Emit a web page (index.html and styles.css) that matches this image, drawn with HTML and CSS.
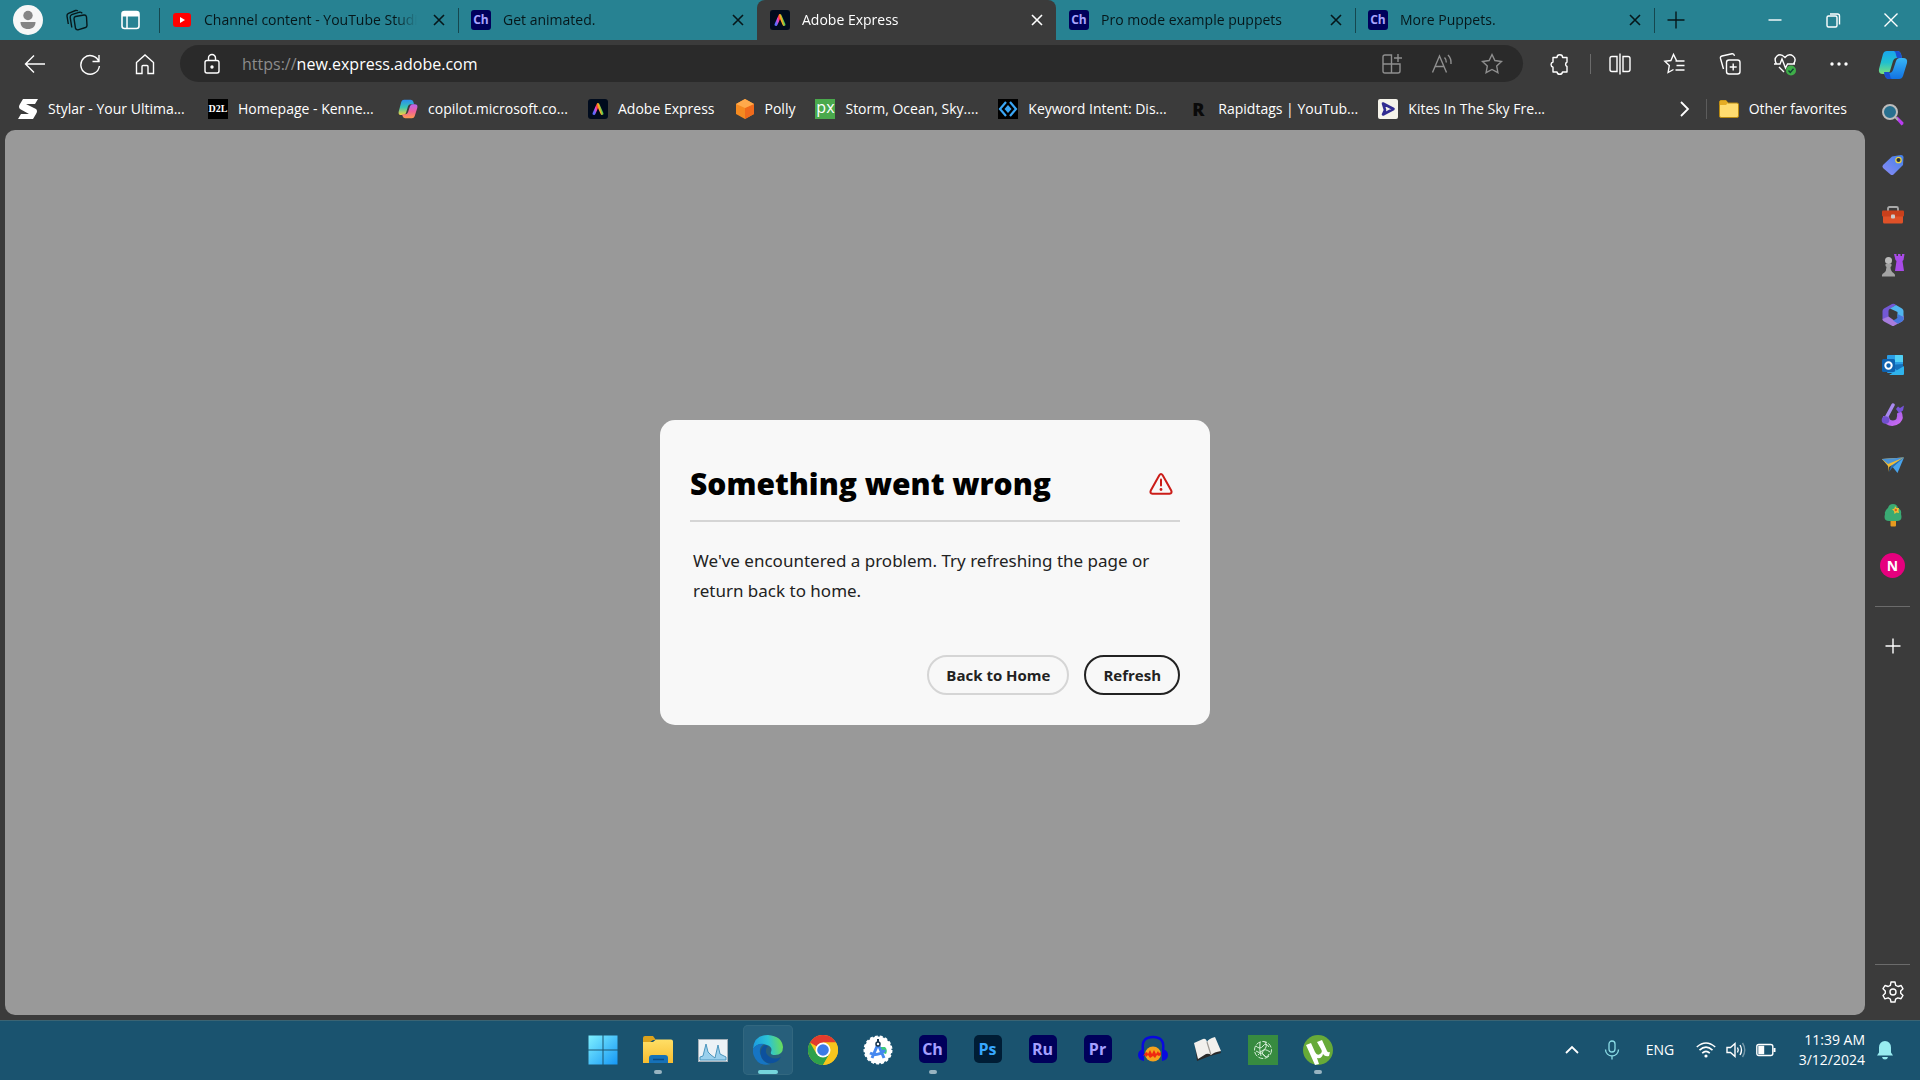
FILE: index.html
```html
<!DOCTYPE html>
<html lang="en">
<head>
  <meta charset="UTF-8" />
  <meta name="viewport" content="width=device-width, initial-scale=1.0"/>
  <title>Adobe Express</title>
  <link rel="stylesheet" href="styles.css">
</head>
<body>
  <!-- shared gradients and icons -->
  <svg class="defs" aria-hidden="true">
    <defs>
      <linearGradient id="gBlueGreen" x1="0" y1="0" x2="0" y2="1"><stop offset="0" stop-color="#19a5ee"/><stop offset="0.5" stop-color="#21c0cf"/><stop offset="1" stop-color="#7be07a"/></linearGradient>
      <linearGradient id="gBlue" x1="0" y1="0" x2="0" y2="1"><stop offset="0" stop-color="#38b6f5"/><stop offset="1" stop-color="#1272e2"/></linearGradient>
      <linearGradient id="gWarm" x1="0" y1="0" x2="0" y2="1"><stop offset="0" stop-color="#b765f0"/><stop offset="0.5" stop-color="#f0609a"/><stop offset="1" stop-color="#ff9a4c"/></linearGradient>
      <linearGradient id="gCool" x1="0" y1="0" x2="0" y2="1"><stop offset="0" stop-color="#2a8cf0"/><stop offset="0.5" stop-color="#38c6b4"/><stop offset="1" stop-color="#f5d13a"/></linearGradient>
      <linearGradient id="gRainbow" x1="0" y1="0.8" x2="1" y2="0.5"><stop offset="0" stop-color="#5a6bff"/><stop offset="0.3" stop-color="#e846d0"/><stop offset="0.5" stop-color="#ff3b30"/><stop offset="0.7" stop-color="#ffb020"/><stop offset="1" stop-color="#35c95a"/></linearGradient>
      <linearGradient id="gPurple" x1="0" y1="0" x2="1" y2="1"><stop offset="0" stop-color="#8b5ae8"/><stop offset="1" stop-color="#d56cf2"/></linearGradient>
      <linearGradient id="gWin" x1="0" y1="0" x2="1" y2="1"><stop offset="0" stop-color="#7ff0ff"/><stop offset="1" stop-color="#1597f5"/></linearGradient>
      <linearGradient id="gFolder" x1="0" y1="0" x2="0" y2="1"><stop offset="0" stop-color="#ffdf66"/><stop offset="1" stop-color="#f8bd30"/></linearGradient>
      <linearGradient id="gEdge" x1="0" y1="0.3" x2="1" y2="0.2"><stop offset="0" stop-color="#1b9de2"/><stop offset="0.5" stop-color="#2cc3d5"/><stop offset="1" stop-color="#6fe04e"/></linearGradient>
      <linearGradient id="gTag" x1="0" y1="1" x2="1" y2="0"><stop offset="0" stop-color="#8d8cf5"/><stop offset="1" stop-color="#3f80ea"/></linearGradient>
    </defs>
    <symbol id="close" viewBox="0 0 20 20"><path d="M5 5l10 10M15 5L5 15" fill="none" stroke="currentColor" stroke-width="1.6"/></symbol>
    <symbol id="express" viewBox="0 0 20 20"><rect width="20" height="20" rx="3" fill="#000b1d"/><path d="M6 14.500L10 5.500l4 9" fill="none" stroke="url(#gRainbow)" stroke-width="3" stroke-linejoin="round" stroke-linecap="round"/></symbol>
  </svg>

  <header class="titlebar">
    <div class="titlebar-left">
      <button class="profile" aria-label="Profile"><svg viewBox="0 0 30 30"><circle cx="15" cy="15" r="15" fill="#f7f7f7"/><circle cx="15" cy="10.500" r="4.700" fill="#858585"/><path d="M7.500 17h15c0 4.500-3 7-7.500 7s-7.500-2.500-7.500-7z" fill="#858585"/></svg></button>
      <button class="title-btn" aria-label="Workspaces"><svg class="line" viewBox="0 0 24 24"><path d="M10.500 8.500l8.500-1.500q2-.2 2.500 1.800l.5 8.700q0 1.500-1.500 2l-7.500 2.300q-2 .3-2.500-1.500L9 10.800q0-1.800 1.500-2.300z"/><path d="M6.800 19.500L5.200 9.500q-.2-2 1.500-2.800l8-2.500q1.800-.3 2.500 1.200"/><path d="M3.300 16L2 8q-.2-1.800 1.500-2.600l7-2.900q1.500-.4 2.300.5"/></svg></button>
      <button class="title-btn" aria-label="Tab actions"><svg viewBox="0 0 24 24"><rect x="4" y="3.500" width="17" height="17" rx="2.500" fill="none" stroke="#fff" stroke-width="1.600"/><path d="M4 4h17v4.500H4z" fill="#fff"/><path d="M9 8v12" stroke="#fff" stroke-width="1.500"/></svg></button>
    </div>
    <nav class="tabs">
      <div class="tab">
        <svg class="favicon" viewBox="0 0 20 20"><rect x="1" y="3" width="18" height="14" rx="3" fill="#f00"/><path d="M8 7l5 3-5 3z" fill="#fff"/></svg>
        <a class="tab-title" href="#">Channel content - YouTube Studio</a>
        <button class="tab-close" aria-label="Close tab"><svg><use href="#close"/></svg></button>
      </div>
      <div class="tab">
        <span class="favicon ch">Ch</span>
        <a class="tab-title" href="#">Get animated.</a>
        <button class="tab-close" aria-label="Close tab"><svg><use href="#close"/></svg></button>
      </div>
      <div class="tab active">
        <svg class="favicon"><use href="#express"/></svg>
        <a class="tab-title" href="#">Adobe Express</a>
        <button class="tab-close" aria-label="Close tab"><svg><use href="#close"/></svg></button>
      </div>
      <div class="tab">
        <span class="favicon ch">Ch</span>
        <a class="tab-title" href="#">Pro mode example puppets</a>
        <button class="tab-close" aria-label="Close tab"><svg><use href="#close"/></svg></button>
      </div>
      <div class="tab">
        <span class="favicon ch">Ch</span>
        <a class="tab-title" href="#">More Puppets.</a>
        <button class="tab-close" aria-label="Close tab"><svg><use href="#close"/></svg></button>
      </div>
      <button class="new-tab" aria-label="New tab"><svg class="line" viewBox="0 0 20 20"><path d="M10 1.500v17M1.500 10h17"/></svg></button>
    </nav>
    <div class="window-controls">
      <button aria-label="Minimize"><svg class="line" viewBox="0 0 16 16"><path d="M1.500 8h13"/></svg></button>
      <button aria-label="Restore"><svg class="line" viewBox="0 0 16 16"><rect x="2" y="4" width="10" height="11" rx="1.500"/><path d="M5 2h7.500q2 0 2 2v8.500"/></svg></button>
      <button aria-label="Close"><svg class="line" viewBox="0 0 16 16"><path d="M1.500 1.500l13 13M14.500 1.500l-13 13"/></svg></button>
    </div>
  </header>

  <div class="browser">
    <div class="browser-main">
      <div class="toolbar">
        <button class="tool" aria-label="Back"><svg class="line" viewBox="0 0 24 24"><path d="M22 12H2.500M11 3.500L2.500 12l8.500 8.500"/></svg></button>
        <button class="tool" aria-label="Refresh page"><svg class="line" viewBox="0 0 24 24"><path d="M21 10a9.300 9.300 0 1 0 .4 4M21 3v6.500h-6.500"/></svg></button>
        <button class="tool" aria-label="Home"><svg class="line" viewBox="0 0 24 24"><path d="M3.500 10.500L12 3l8.500 7.500V21.500H15v-7q0-1-1-1h-4q-1 0-1 1v7H3.500z"/></svg></button>
        <div class="address">
          <svg class="line lock" viewBox="0 0 24 24"><rect x="5" y="8.500" width="14" height="12.500" rx="2"/><path d="M8.500 8.500V6a3.500 3.500 0 0 1 7 0v2.500"/><circle cx="12" cy="15" r="1" fill="#fff"/></svg>
          <label for="url">https://</label>
          <input id="url" type="text" value="new.express.adobe.com">
          <button aria-label="App available"><svg class="line" viewBox="0 0 24 24"><path d="M3 12h17v7q0 2-2 2H5q-2 0-2-2V5q0-2 2-2h6.500v18M18 2v8M14 6h8"/></svg></button>
          <button aria-label="Read aloud"><svg class="line" viewBox="0 0 24 24"><path d="M2.500 20.500L9.500 4l7 16.500M5 14.500h9M14.500 5.500q2 2 1.800 5M18 3q3.500 3.500 3 9"/></svg></button>
          <button aria-label="Add to favorites"><svg class="line" viewBox="0 0 24 24"><path d="M12 2.500l2.900 6 6.600 1-4.800 4.600 1.200 6.600L12 17.500l-5.900 3.200 1.200-6.600L2.500 9.500l6.600-1z"/></svg></button>
        </div>
        <button class="tool" aria-label="Extensions"><svg class="line" viewBox="0 0 24 24"><path d="M9 5.500a2.800 2.800 0 0 1 5.600 0H19v4.500a2.500 2.500 0 0 0 0 4.500V20h-4.500a2.800 2.800 0 0 1-5.500 0H5v-4.800a2.700 2.700 0 0 1 0-5.200V5.500z" stroke-linejoin="round"/></svg></button>
        <span class="tool-sep"></span>
        <button class="tool" aria-label="Split screen"><svg class="line" viewBox="0 0 24 24"><path d="M9 4.500H4q-2 0-2 2v11q0 2 2 2h5zM15 4.500h5q2 0 2 2v11q0 2-2 2h-5zM12 1.500v21"/></svg></button>
        <button class="tool" aria-label="Favorites"><svg class="line" viewBox="0 0 24 24"><path d="M13.500 8.500L10.500 2.500l-2.600 6-6 .8 4.400 4.200-1.200 7 5.400-3M12.500 9h9M13.500 13.500h8M12.500 18h9"/></svg></button>
        <button class="tool" aria-label="Collections"><svg class="line" viewBox="0 0 24 24"><rect x="8.500" y="8" width="13.500" height="14" rx="2.500"/><path d="M15.200 11.500v7M11.700 15h7M5.500 17L2.500 6.500q-.5-2 1.500-2.500L14 1.800q2-.3 2.500 2"/></svg></button>
        <button class="tool" aria-label="Browser essentials"><svg class="line" viewBox="0 0 24 24"><path d="M3.500 12Q.5 7 4 4t8 1.500Q16 1 20 4t.5 8M1 12h6l2-5 3.500 9 2-4H22M6 15l5 5"/><circle cx="18" cy="18.500" r="5" fill="#3fae49" stroke="none"/><path d="M15.500 18.500l1.800 2 3.200-3.700" stroke="#143"/></svg></button>
        <button class="tool more" aria-label="Settings and more"><svg viewBox="0 0 24 24"><circle cx="5" cy="12" r="1.700" fill="#fff"/><circle cx="12" cy="12" r="1.700" fill="#fff"/><circle cx="19" cy="12" r="1.700" fill="#fff"/></svg></button>
      </div>

      <nav class="bookmarks">
        <a class="bookmark cut" href="#"><svg class="favicon" viewBox="0 0 20 20"><path d="M5 0h15l-3 5H8l10 5q2 2 0 5l-3 5H0l3-5h8L2 10Q0 8 2 5z" fill="#fff"/></svg>Stylar - Your Ultima...</a>
        <a class="bookmark cut" href="#"><span class="favicon d2l">D2L</span>Homepage - Kenne...</a>
        <a class="bookmark cut" href="#"><svg class="favicon" viewBox="0 0 30 30"><path d="M9 1h10q3 0 4 3l1 4h-5q-3 0-4 3l-3 10q-1 3-4 3H5q-5 0-4-5L5 4q1-3 4-3z" fill="url(#gCool)"/><path d="M21 29H11q-3 0-4-3l-1-3h5q3 0 4-3l3-9q1-3 4-3h3q5 0 4 5l-4 13q-1 3-4 3z" fill="url(#gWarm)"/></svg>copilot.microsoft.co...</a>
        <a class="bookmark" href="#"><svg class="favicon"><use href="#express"/></svg>Adobe Express</a>
        <a class="bookmark" href="#"><svg class="favicon" viewBox="0 0 20 20"><path d="M10 0l9 5v10l-9 5-9-5V5z" fill="#f58a20"/><path d="M10 9l9-4v10l-9 5z" fill="#f06a1c"/><path d="M10 0l9 5-9 4-9-4z" fill="#ffa94b"/></svg>Polly</a>
        <a class="bookmark" href="#"><span class="favicon px">px</span>Storm, Ocean, Sky....</a>
        <a class="bookmark cut" href="#"><svg class="favicon" viewBox="0 0 20 20"><rect width="20" height="20"/><path d="M8 3l-6 7 6 7M12 3l6 7-6 7" fill="none" stroke="#3aa6f5" stroke-width="2.200"/><path d="M10 6l3.500 4-3.500 4-3.500-4z" fill="#3aa6f5"/></svg>Keyword Intent: Dis...</a>
        <a class="bookmark cut" href="#"><span class="favicon rapid">R</span>Rapidtags | YouTub...</a>
        <a class="bookmark cut" href="#"><svg class="favicon" viewBox="0 0 20 20"><rect width="20" height="20" rx="2" fill="#f5f3ea"/><path d="M5 4.500l10.500 5.500L5 15.500l2-4.500z" fill="none" stroke="#312c91" stroke-width="2.600" stroke-linejoin="round"/></svg>Kites In The Sky Fre...</a>
        <button class="overflow" aria-label="More favorites"><svg class="line" viewBox="0 0 20 20"><path d="M7 3l7 7-7 7" stroke-width="1.800"/></svg></button>
        <a class="bookmark other" href="#"><svg class="favicon" viewBox="0 0 20 20"><path d="M.5 3q0-1.500 1.500-1.500h5L9 4h9q1.500 0 1.500 1.500V17q0 1.500-1.500 1.500H2Q.5 18.500.5 17z" fill="#ffdc70" stroke="#b98a10"/><path d="M.8 6H7l2-2-2-2.500H2Q.8 1.500.8 3z" fill="#e5ac24"/></svg>Other favorites</a>
      </nav>

      <main class="page">
        <section class="dialog" role="alertdialog" aria-labelledby="dialog-title">
          <div class="dialog-head">
            <h1 id="dialog-title">Something went wrong</h1>
            <svg viewBox="0 0 24 24"><path d="M10.300 3.300q1.700-2.600 3.400 0l8.500 15.200q1.300 3-1.700 3.300h-17q-3-.3-1.700-3.300z" fill="none" stroke="#cb1d18" stroke-width="2"/><path d="M12 7.500v6" stroke="#cb1d18" stroke-width="2" stroke-linecap="round"/><circle cx="12" cy="17.500" r="1.400" fill="#cb1d18"/></svg>
          </div>
          <p>We've encountered a problem. Try refreshing the page or return back to home.</p>
          <div class="dialog-actions">
            <button>Back to Home</button>
            <button class="primary">Refresh</button>
          </div>
        </section>
      </main>
    </div>

    <aside class="sidebar">
      <button class="copilot" aria-label="Copilot"><svg viewBox="0 0 30 30"><path d="M9 1h10q3 0 4 3l1 4h-5q-3 0-4 3l-3 10q-1 3-4 3H5q-5 0-4-5L5 4q1-3 4-3z" fill="url(#gBlueGreen)"/><path d="M21 29H11q-3 0-4-3l-1-3h5q3 0 4-3l3-9q1-3 4-3h3q5 0 4 5l-4 13q-1 3-4 3z" fill="url(#gBlue)"/><path d="M19 8h5l-1-4q-1-3-4-3h-3q2 1 2 4zM11 22H6l1 4q1 3 4 3h3q-2-1-2-4z" fill="#1b4fd0"/></svg></button>
      <button aria-label="Search"><svg viewBox="0 0 24 24"><path d="M14.500 15.500l2-2 6 6q.5 2-2 3z" fill="#b93cf0"/><path d="M13 13l4 4" stroke="#aaa" stroke-width="2"/><circle cx="9" cy="9" r="7" fill="#28708f" stroke="#bdbdbd" stroke-width="2"/></svg></button>
      <button aria-label="Shopping"><svg viewBox="0 0 24 24"><path d="M11 3.500l9-1.500q2.500 0 2.500 2.500L22 12 12.500 21.500q-1.500 1.200-3 0L2 15q-1.200-1.500 0-3z" fill="url(#gTag)"/><circle cx="17.500" cy="7" r="2.700" fill="#25303c" stroke="#e9d34c" stroke-width="1.300"/></svg></button>
      <button aria-label="Tools"><svg viewBox="0 0 24 24"><path d="M7 8V5.500Q7 4 8.500 4h7Q17 4 17 5.500V8" fill="none" stroke="#aaa" stroke-width="1.800"/><rect x="2" y="11" width="20" height="9.500" rx="1.500" fill="#df5128"/><rect x="1" y="7.500" width="22" height="6" rx="1" fill="#c9401c"/><rect x="10" y="11.500" width="4" height="4" rx="1" fill="#ccc"/></svg></button>
      <button aria-label="Games"><svg viewBox="0 0 24 24"><path d="M13 1h2.500v2H17V1h2.500v2H21V1h2.500l-1 6-1 1 1.500 10h-9l1.500-10-1-1z" fill="#a94be8"/><circle cx="7.500" cy="7.500" r="3.500" fill="#bababa"/><path d="M4.500 11h6v2l-1 1q0 4 3 6 2 1 1.500 3.500H1Q.5 21 3 20q2.500-2 2.500-6l-1-1z" fill="#a3a3a3"/></svg></button>
      <button aria-label="Microsoft 365"><svg viewBox="0 0 24 24"><path d="M11 1L3 5.500Q1.500 6.500 1.500 8v9l6-3V8q0-1.500 1.500-2.200L15 2q-2-2-4-1z" fill="#7358d5"/><path d="M15 2l6 3.500q1.500 1 1.500 2.500v9l-6-3V9L9 5.500z" fill="#50b6ef"/><path d="M1.500 16l6-2.500 5 3.500q2 1 4-.5l6-4V16q0 1.500-1.500 2.500l-7.500 4q-1.500 1-3 0L3 18.500Q1.500 17.500 1.500 16z" fill="#a77cdd"/><path d="M16.500 11l6 3v2q0 1.500-1.500 2.500l-4 2.200-5-3.200 3-1.500q1.500-.8 1.500-2z" fill="#4677dd"/></svg></button>
      <button aria-label="Outlook"><svg viewBox="0 0 24 24"><rect x="6" y="2" width="16" height="18" rx="1" fill="#2a9de5"/><path d="M14 2h7q1 0 1 1v6h-8z" fill="#50d0f5"/><path d="M8 12l14 9V11z" fill="#1570bb"/><path d="M23 11v10q0 1-1 1H8l15-9z" fill="#2fb3ec"/><rect x="1" y="6" width="13" height="13" rx="1.500" fill="#0f62af"/><circle cx="7.500" cy="12.500" r="3.200" fill="none" stroke="#fff" stroke-width="2"/></svg></button>
      <button aria-label="Image Creator"><svg viewBox="0 0 24 24"><path d="M20 8q4 7-1 12-5 4-11 2.500Q1 20 2 13l6 1q.5 3.500 4 3.500 5-.5 4-7z" fill="url(#gPurple)"/><path d="M12 2L5 15" stroke="#a889ef" stroke-width="3.500" stroke-linecap="round"/><circle cx="4.500" cy="17" r="3.800" fill="#7050cd"/><path d="M15 6l2-2.500 2 1.500 4-2.500-1 5-4 2.500z" fill="#7653d8"/></svg></button>
      <button aria-label="Drop"><svg viewBox="0 0 24 24"><path d="M1 6l22-1.500L8 12z" fill="#3a78bd"/><path d="M23 4.500L16.500 20 10 12z" fill="#49a4ec"/><path d="M1 6l22-1.500L8 14v5l-1-6z" fill="#f1bd35"/><path d="M1 6l22-1.500L7 11z" fill="#4a93d6"/><path d="M23 4.500L10 13l-2 6 3-4z" fill="#2c6fae"/></svg></button>
      <button aria-label="E-tree"><svg viewBox="0 0 24 24"><rect x="9.500" y="15" width="5.500" height="8.500" rx="1" fill="#e59a20"/><path d="M12 1q4 0 5 4 4 2 3 6 2 7-4 7H8q-6 0-4-7-1-3 3-6 1-4 5-4z" fill="#3aaa73"/><path d="M14 3l1.500 2L18 5l-.5 2.500L18 10l-2.500-.5L13.500 11 13 8l-2-1.500 2.500-1z" fill="#f0be35"/><circle cx="14.800" cy="7" r="1.200" fill="#d85b22"/></svg></button>
      <button aria-label="N app"><span class="n-app">N</span></button>
      <hr>
      <button aria-label="Customize"><svg class="line" viewBox="0 0 24 24"><path d="M12 4.500v15M4.500 12h15"/></svg></button>
      <div class="sidebar-bottom">
        <hr>
        <button aria-label="Settings"><svg class="line" viewBox="0 0 24 24"><path d="M10 2h4l.7 3.300 2.300 1.200 3.200-1L22 8.800 19.700 11v2.300L22 15.500l-2 3.200-3.200-.8-2.200 1.200L14 22h-4l-.7-3-2.200-1.200-3.200 1L2 15.500l2.300-2.200V11L2 8.700l2-3.200 3.200 1 2.200-1.200z" stroke-linejoin="round"/><circle cx="12" cy="12" r="3"/></svg></button>
      </div>
    </aside>
  </div>

  <footer class="taskbar">
    <div class="tray-spacer"></div>
    <div class="apps">
      <button aria-label="Start"><svg viewBox="0 0 30 30"><path d="M.5.500h14v14H.500zM15.500.500h14v14h-14zM.500 15.500h14v14H.500zM15.500 15.500h14v14h-14z" fill="url(#gWin)"/></svg></button>
      <button class="running" aria-label="File Explorer"><svg viewBox="0 0 30 30"><path d="M0 3q0-2 2-2h8l3 4h-3L0 12z" fill="#dba21c"/><path d="M0 7h10l3-2.500h15q2 0 2 2V28H0z" fill="url(#gFolder)"/><path d="M6 28v-5q0-3 3-3h13q3 0 3 3v5z" fill="#1671b8"/><path d="M10 24.500h11" stroke="#0b4b86" stroke-width="1.500"/></svg></button>
      <button aria-label="Task Manager"><svg viewBox="0 0 30 30"><rect x=".5" y="4.500" width="29" height="22" fill="#ecf2f6" stroke="#a3afb8"/><path d="M2 22l3-1 3-12 2 8 3 3 4 3 3-13 2 9 2 1 4 2v3H2z" fill="#9ad0ed" stroke="#4b95bd"/></svg></button>
      <button class="current" aria-label="Microsoft Edge"><svg viewBox="0 0 30 30"><path d="M0 14Q1 0 15 0q14 1 15 12 0 8-8 8-5 0-4-3 2-5-4-7Q5 7 0 14z" fill="url(#gEdge)"/><path d="M0 14q4-6 11-5-5 3-4 9 2 10 11 11Q5 32 1 21-.5 18 0 14z" fill="#1675c4"/><path d="M12 10q-7 5-3 13 5 8 14 4 3-1 5-5-6 3-11 0t-4-7q0-3 2-3-1-2-3-2z" fill="#0d519d"/></svg></button>
      <button aria-label="Google Chrome"><svg viewBox="0 0 30 30"><circle cx="15" cy="15" r="15" fill="#f8c51c"/><path d="M15 15L2 7.500A15 15 0 0 1 28 7.500H15z" fill="#e33b2e"/><path d="M2 7.500A15 15 0 0 0 15 30l6.500-11.200L8.500 18.800z" fill="#2da14c"/><path d="M15 7.500h13A15 15 0 0 1 15 30l6.500-11z" fill="#f8c51c"/><circle cx="15" cy="15" r="7.500" fill="#fff"/><circle cx="15" cy="15" r="5.800" fill="#3c7be8"/></svg></button>
      <button aria-label="Android Studio"><svg viewBox="0 0 30 30"><circle cx="15" cy="15" r="13.500" fill="#fff" stroke="#fff" stroke-width="2" stroke-dasharray="3 2"/><path d="M17 12h5q3 3 1 7l-3-1z" fill="#3ccb78"/><path d="M15 9L9 23M15 9l6 14M7 18q8 4 15-3" fill="none" stroke="#4587ef" stroke-width="3"/><circle cx="15" cy="9" r="2" fill="#fff" stroke="#16354d" stroke-width="1.500"/><path d="M15 4v3" stroke="#16354d" stroke-width="2"/></svg></button>
      <button class="running" aria-label="Character Animator"><span class="adobe">Ch</span></button>
      <button aria-label="Photoshop"><span class="adobe ps">Ps</span></button>
      <button aria-label="Premiere Rush"><span class="adobe">Ru</span></button>
      <button aria-label="Premiere Pro"><span class="adobe">Pr</span></button>
      <button aria-label="Audacity"><svg viewBox="0 0 30 30"><path d="M5 15Q3 2 15 2t10 13" fill="none" stroke="#0909df" stroke-width="2.500"/><path d="M6 14v12q-6-1-6-6t6-6zM24 14v12q6-1 6-6t-6-6z" fill="#0909df"/><ellipse cx="15" cy="19" rx="8" ry="7.500" fill="#f5a21c"/><path d="M7 18l2-1 1 2 2-4 2 4 2-4 2 4 2-3 1 2 2-1v3l-2 1-2-1-2 3-2-2-3 2-2-3-2 2-1-2-2 1z" fill="#f02811"/></svg></button>
      <button aria-label="Book"><svg viewBox="0 0 30 30"><path d="M2 10l2 16 13-5 11-3-1-3z" fill="#292929"/><path d="M1 8l9-4q3-1 4 3l4 13q-2-2-5-1l-8 5zM14 7q1-3 8-5l6 14q-7 1-10 4z" fill="#f2f0ed"/><path d="M14 7l4 13" stroke="#9d9994" stroke-width="1.200"/></svg></button>
      <button aria-label="Quran"><svg viewBox="0 0 30 30"><rect width="30" height="30" fill="#378b40"/><g fill="none" stroke="#d7efd9" stroke-width="1"><circle cx="15" cy="15" r="8.500" stroke-dasharray="5 1.500"/><path d="M8 11q4 4 7 0t6 1M8 16q3 3 6 0t8 1M10 20q3-4 6 0t5-1M12 7q-1 8 1 14M17 7q3 4-1 8t2 7"/></g></svg></button>
      <button class="running" aria-label="uTorrent"><svg viewBox="0 0 30 30"><circle cx="15" cy="15" r="15" fill="#67aa38"/><path d="M3 10l5-2 4 9q2 4 5 2t1-5l-4-7 5-2 5 11q1 2 3 1l-1 4q-4 1-6-2-1 5-6 4l2 6-4 1z" fill="#fff"/></svg></button>
    </div>
    <div class="tray">
      <button class="chevron" aria-label="Show hidden icons"><svg viewBox="0 0 20 20"><path d="M4 13l6-6 6 6" fill="none" stroke="#fff" stroke-width="1.800"/></svg></button>
      <button class="mic" aria-label="Microphone"><svg viewBox="0 0 20 20"><rect x="7" y="1" width="6" height="11" rx="3"/><path d="M3.500 9.500a6.500 6.500 0 0 0 13 0M10 16v3.500"/></svg></button>
      <button class="lang">ENG</button>
      <button class="status" aria-label="Network, volume and battery">
        <svg class="line" viewBox="0 0 20 20"><path d="M.8 7q9.200-8 18.400 0M3.500 10.200q6.500-6 13 0M6.200 13.200q3.800-3.500 7.600 0" stroke-width="1.600"/><circle cx="10" cy="16" r="1.600" fill="#fff" stroke="none"/></svg>
        <svg class="line" viewBox="0 0 20 20"><path d="M1 7.500h3.500L9 3.500v13l-4.500-4H1zM11.500 7.500q1.500 2.500 0 5M14 5q3 5 0 10"/><path d="M16.500 3q4.500 7 0 14" opacity=".4"/></svg>
        <svg class="line" viewBox="0 0 20 20"><rect x=".8" y="4.500" width="16" height="11" rx="2"/><path d="M3 6.500h4.500v7H3z" fill="#fff"/><path d="M18.500 8v4" stroke-width="2"/></svg>
      </button>
      <button class="clock"><time>11:39 AM</time><time>3/12/2024</time></button>
      <button class="bell" aria-label="Notifications"><svg viewBox="0 0 20 20"><path d="M2 15.500l2-3V7.500Q4.500 1 10 1t6 6.500v5l2 3zM7 17h6q-.5 2.500-3 2.500T7 17z" fill="#98ecf0"/></svg></button>
    </div>
  </footer>
</body>
</html>
```

FILE: styles.css
```css
* { box-sizing: border-box; }
body {
  margin: 0;
  height: 100vh;
  display: flex;
  flex-direction: column;
  overflow: hidden;
  background: #3b3b3b;
  color: #fff;
  font-family: "Open Sans", "Noto Sans", sans-serif;
  font-size: 14px;
  line-height: 20px;
}
button {
  display: flex;
  align-items: center;
  justify-content: center;
  flex-shrink: 0;
  padding: 0;
  border: none;
  background: none;
  color: inherit;
  font: inherit;
  cursor: pointer;
}
a {
  color: inherit;
  text-decoration: none;
}
svg {
  display: block;
  flex-shrink: 0;
}
.defs {
  position: absolute;
  width: 0;
  height: 0;
}
.line {
  fill: none;
  stroke: currentColor;
  stroke-width: 1.4;
}
.favicon {
  width: 20px;
  height: 20px;
  flex-shrink: 0;
}

/* tab strip */
.titlebar {
  display: flex;
  height: 40px;
  background: #278292;
  color: #06171a;
}
.titlebar-left {
  display: flex;
  align-items: center;
  width: 159px;
  padding-left: 13px;
}
.profile svg {
  width: 30px;
  height: 30px;
}
.title-btn {
  width: 53px;
  padding-left: 14px;
}
.title-btn svg {
  width: 24px;
  height: 24px;
}
.tabs {
  display: flex;
  flex: 1;
  min-width: 0;
}
.tab {
  position: relative;
  display: flex;
  align-items: center;
  gap: 12px;
  flex: 0 1 299px;
  min-width: 0;
  padding: 0 9px 0 13px;
}
.tab::before,
.new-tab::before {
  content: "";
  position: absolute;
  left: 0;
  top: 8px;
  width: 1px;
  height: 25px;
  background: #15474f;
}
.tab-title {
  flex: 1;
  overflow: hidden;
  white-space: nowrap;
  -webkit-mask-image: linear-gradient(to right, #000 90%, transparent);
  mask-image: linear-gradient(to right, #000 90%, transparent);
}
.tab-close svg {
  width: 20px;
  height: 20px;
}
.tab.active {
  background: #3b3b3b;
  color: #fff;
  border-radius: 8px 8px 0 0;
}
.tab.active::before,
.tab.active + .tab::before {
  display: none;
}
.ch {
  border-radius: 3px;
  background: #00005b;
  color: #a9a4ff;
  font-size: 12px;
  font-weight: 700;
  text-align: center;
}
.new-tab {
  position: relative;
  width: 44px;
}
.new-tab svg {
  width: 20px;
  height: 20px;
}
.window-controls {
  display: flex;
  color: #fff;
}
.window-controls button {
  width: 58px;
}
.window-controls svg {
  width: 16px;
  height: 16px;
}

/* toolbar */
.browser {
  display: flex;
  flex: 1;
  min-height: 0;
}
.browser-main {
  display: flex;
  flex-direction: column;
  flex: 1;
  min-width: 0;
}
.toolbar {
  display: flex;
  align-items: center;
  height: 47px;
  padding-left: 7px;
}
.tool {
  width: 55px;
  height: 37px;
}
.tool.more {
  width: 53px;
}
.tool svg,
.address svg {
  width: 24px;
  height: 24px;
}
.tool-sep {
  width: 1px;
  height: 20px;
  margin: 0 1px 0 3px;
  background: #6b6b6b;
}
.address {
  display: flex;
  align-items: center;
  flex: 1;
  height: 37px;
  margin: 0 9px 0 8px;
  padding: 0 6px 0 20px;
  border-radius: 19px;
  background: #2a2a2a;
  font-size: 16px;
}
.address label {
  margin-left: 18px;
  color: #8c8c8c;
}
.address input {
  flex: 1;
  min-width: 0;
  padding: 0;
  border: none;
  outline: none;
  background: none;
  color: #fff;
  font: inherit;
}
.address button {
  width: 50px;
  color: #8f8f8f;
}

/* favorites bar */
.bookmarks {
  display: flex;
  align-items: center;
  height: 43px;
  padding: 0 18px;
  white-space: nowrap;
}
.bookmark {
  display: flex;
  align-items: center;
  gap: 10px;
  margin-right: 20px;
}
.bookmark.cut {
  width: 170px;
}
.d2l {
  background: #000;
  font: 700 10px/20px "Liberation Serif", serif;
  text-align: center;
}
.px {
  background: #4aa94c;
  font-size: 16px;
  line-height: 16px;
  text-align: center;
}
.rapid {
  color: #0a0a0a;
  font-size: 18px;
  font-weight: 800;
  text-align: center;
}
.overflow {
  width: 20px;
  margin-left: auto;
}
.overflow svg {
  width: 20px;
  height: 20px;
}
.bookmark.other {
  margin: 0 0 0 12px;
  padding-left: 12px;
  border-left: 1px solid #5c5c5c;
}

/* page and dialog */
.page {
  display: flex;
  align-items: center;
  justify-content: center;
  flex: 1;
  margin: 0 0 5px 5px;
  border-radius: 10px;
  background: #999;
}
.dialog {
  width: 550px;
  padding: 40px 30px 30px;
  border-radius: 15px;
  background: #f8f8f8;
  color: #222;
}
.dialog-head {
  display: flex;
  align-items: center;
  justify-content: space-between;
  height: 62px;
  padding: 0 7px 12px 0;
  border-bottom: 2px solid #d5d5d5;
}
.dialog-head svg {
  width: 24px;
  height: 24px;
}
.dialog h1 {
  margin: 0;
  color: #000;
  font-size: 30px;
  font-weight: 800;
  line-height: 40px;
}
.dialog p {
  margin: 24px 3px 49px;
  font-family: "Noto Sans", sans-serif;
  font-size: 17px;
  line-height: 30px;
}
.dialog-actions {
  display: flex;
  justify-content: flex-end;
  gap: 15px;
}
.dialog-actions button {
  height: 40px;
  padding: 0 17px;
  border: 2px solid #d5d5d5;
  border-radius: 20px;
  font-size: 15px;
  font-weight: 700;
}
.dialog-actions .primary {
  border-color: #222;
}

/* sidebar */
.sidebar {
  display: flex;
  flex-direction: column;
  align-items: center;
  width: 55px;
}
.sidebar button {
  width: 55px;
  height: 50px;
}
.sidebar svg {
  width: 24px;
  height: 24px;
}
.sidebar .copilot svg {
  width: 30px;
  height: 30px;
}
.n-app {
  width: 25px;
  border-radius: 50%;
  background: #e6007e;
  font-weight: 700;
  line-height: 25px;
}
.sidebar hr {
  width: 35px;
  height: 1px;
  margin: 16px 0 14px;
  border: none;
  background: #6b6b6b;
}
.sidebar-bottom {
  margin: auto 0 3px;
}
.sidebar-bottom hr {
  margin: 0 10px 2px;
}

/* taskbar */
.taskbar {
  display: flex;
  align-items: center;
  height: 60px;
  box-shadow: inset 0 1px #3b6473;
  background: #1a536f;
}
.tray-spacer {
  flex: 1;
  padding-left: 25px;
}
.apps {
  display: flex;
  gap: 5px;
}
.apps button {
  position: relative;
  width: 50px;
  height: 50px;
  border-radius: 5px;
}
.apps svg {
  width: 30px;
  height: 30px;
}
.apps .current {
  background: #275f7b;
  box-shadow: inset 0 0 0 1px #32677f;
}
.apps .running::after,
.apps .current::after {
  content: "";
  position: absolute;
  bottom: 1px;
  width: 8px;
  height: 4px;
  border-radius: 2px;
  background: #98b4c1;
}
.apps .current::after {
  width: 20px;
  background: #75d5dc;
}
.adobe {
  width: 28px;
  margin-bottom: 2px;
  border-radius: 5px;
  background: #00005b;
  color: #a5a0ff;
  font-size: 16px;
  font-weight: 700;
  line-height: 28px;
}
.adobe.ps {
  background: #001d35;
  color: #37a8ff;
}
.tray {
  display: flex;
  align-items: center;
  justify-content: flex-end;
  flex: 1;
  padding-right: 25px;
}
.tray svg {
  width: 20px;
  height: 20px;
}
.chevron {
  width: 40px;
}
.mic {
  width: 40px;
}
.mic svg {
  fill: none;
  stroke: #8bdce5;
  stroke-width: 1.3;
}
.lang {
  width: 56px;
}
.status {
  gap: 10px;
  margin-left: 8px;
}
.clock {
  flex-direction: column;
  align-items: flex-end;
  width: 89px;
}
.bell {
  margin-left: 10px;
}
```
